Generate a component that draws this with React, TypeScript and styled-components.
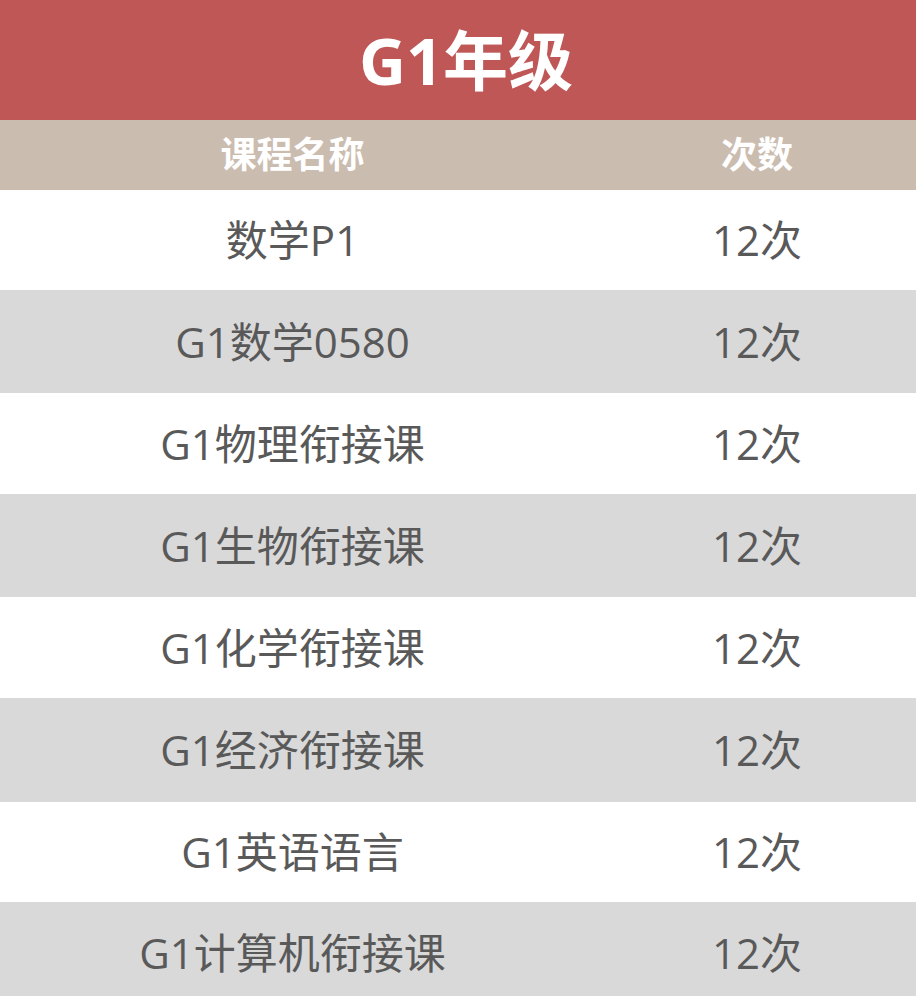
import React from "react";
import styled, { createGlobalStyle } from "styled-components";

const Global = createGlobalStyle`
  html, body { margin: 0; padding: 0; overflow: hidden; background: #ffffff; }
  body { font-family: "Open Sans", "Noto Sans CJK SC", sans-serif; }
`;

const Page = styled.div`
  width: 916px;
  overflow: hidden;
`;

const TitleBar = styled.div`
  height: 120px;
  background: #c05757;
  display: flex;
  align-items: center;
  justify-content: center;
  color: #ffffff;
  font-family: "Open Sans", "Noto Sans CJK SC", sans-serif;
  font-weight: 700;
  font-size: 65px;
  line-height: 1;
  padding-left: 16px;
  box-sizing: border-box;
`;

const Row = styled.div<{ $bg: string; $h: number }>`
  display: grid;
  grid-template-columns: 585px 344px;
  height: ${(p) => p.$h}px;
  background: ${(p) => p.$bg};
  align-items: center;
`;

const Cell = styled.div<{ $head?: boolean }>`
  text-align: center;
  font-family: "Open Sans", "Noto Sans CJK SC", sans-serif;
  font-size: ${(p) => (p.$head ? 36 : 42)}px;
  font-weight: ${(p) => (p.$head ? 700 : 400)};
  color: ${(p) => (p.$head ? "#ffffff" : "#595959")};
  line-height: 1;
  white-space: nowrap;
`;

const rows = [
  "数学P1",
  "G1数学0580",
  "G1物理衔接课",
  "G1生物衔接课",
  "G1化学衔接课",
  "G1经济衔接课",
  "G1英语语言",
  "G1计算机衔接课",
];

const heights = [100, 103, 101, 103, 101, 104, 100, 102];

export default function App() {
  return (
    <Page>
      <Global />
      <TitleBar>G1年级</TitleBar>
      <Row $bg="#cbbcb0" $h={70}>
        <Cell $head>课程名称</Cell>
        <Cell $head>次数</Cell>
      </Row>
      {rows.map((name, i) => (
        <Row key={name} $bg={i % 2 === 0 ? "#ffffff" : "#d9d9d9"} $h={heights[i]}>
          <Cell>{name}</Cell>
          <Cell>12次</Cell>
        </Row>
      ))}
    </Page>
  );
}
